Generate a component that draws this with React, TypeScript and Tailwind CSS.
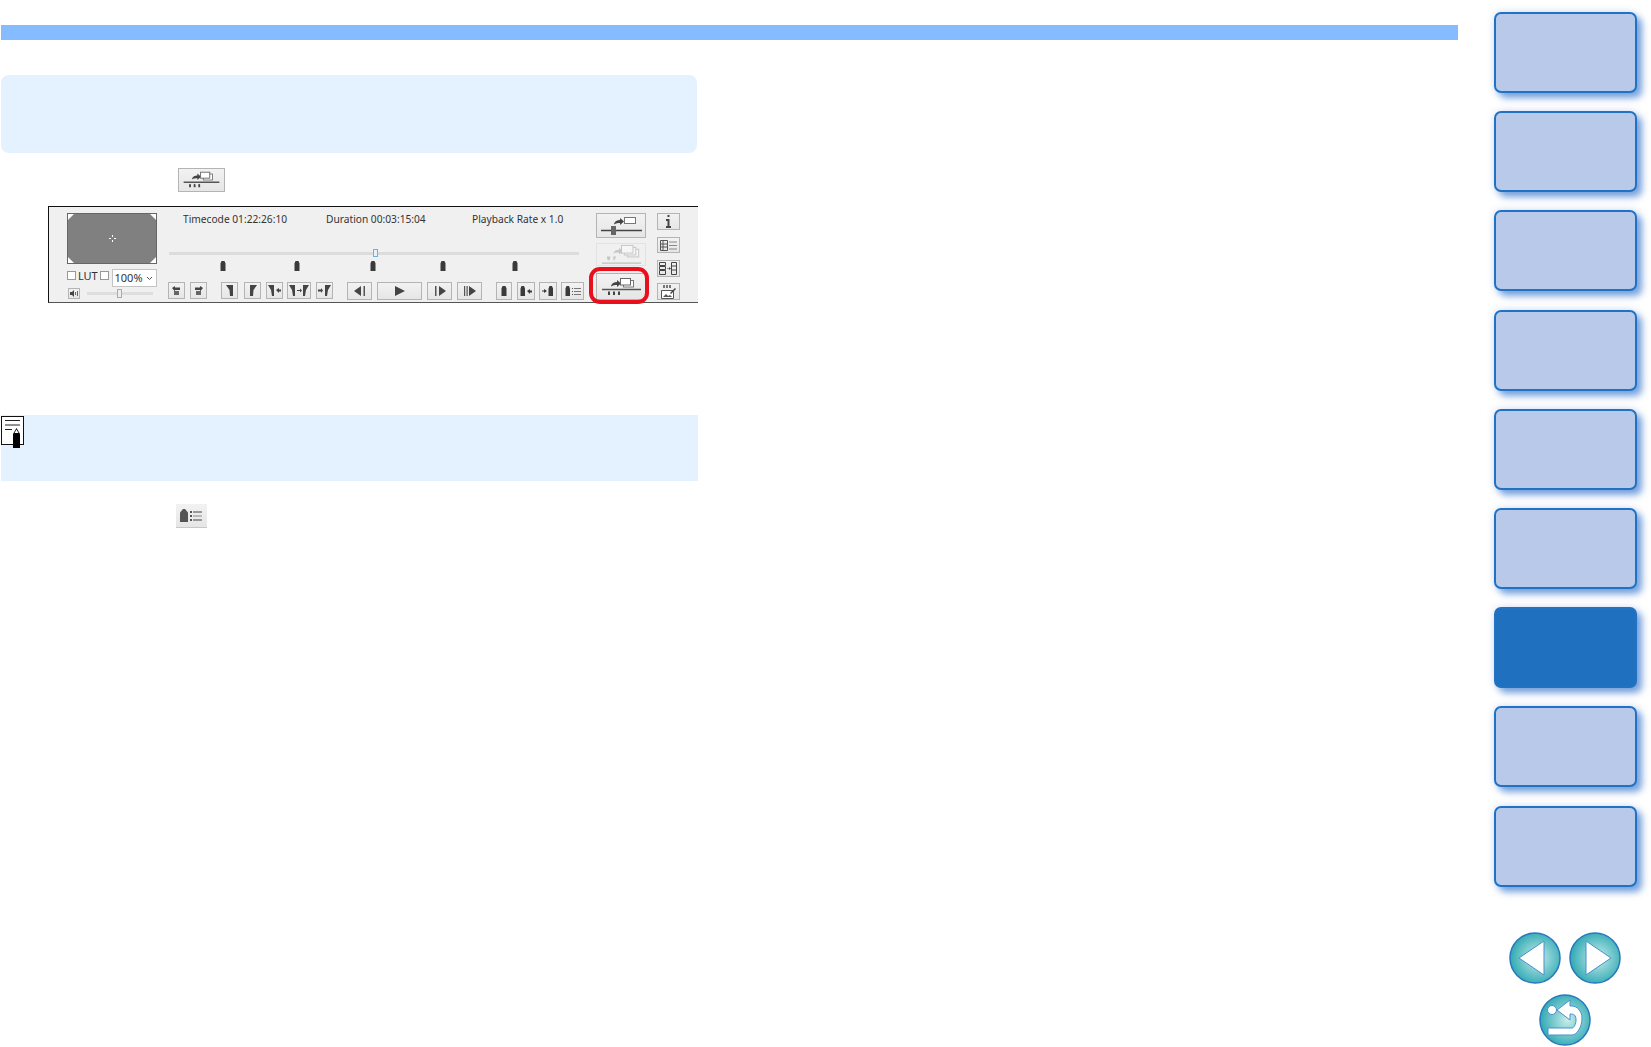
import type { ReactNode } from 'react'

const navCards = [false, false, false, false, false, false, true, false, false]

function Btn({ className, children }: { className: string; children?: ReactNode }) {
  return (
    <div className={`flex shrink-0 items-center justify-center border border-[#b4b4b4] bg-gradient-to-b from-[#f2f2f2] to-[#e6e6e6] ${className}`}>
      {children}
    </div>
  )
}

function Marker({ className }: { className?: string }) {
  return (
    <svg viewBox="0 0 8 10" className={`h-[10px] w-[8px] shrink-0 ${className ?? ''}`}>
      <path d="M2.500 0h3l1 2.500V10h-5V2.500z" fill="#3a3a3a" />
    </svg>
  )
}

function SeqIcon({ className }: { className: string }) {
  return (
    <svg viewBox="0 0 47 24" className={className}>
      <path d="M13 11c1-3 3-4 6-4V5l4 3.500-4 3.500v-2c-2 0-4 0-6 1.500z" fill="#444" />
      <rect x="25.500" y="5.500" width="10" height="6.500" fill="#fff" stroke="#777" />
      <rect x="22.500" y="3.500" width="10" height="6.500" fill="#fff" stroke="#666" />
      <path d="M4 14.500h39" stroke="#555" strokeWidth="1.500" />
      <path d="M10 20v-3l1-1 1 1v3zM15 20v-3l1-1 1 1v3zM20 20v-3l1-1 1 1v3z" fill="#444" />
    </svg>
  )
}

function NavCircle({ id, children }: { id: string; children: ReactNode }) {
  return (
    <svg viewBox="0 0 52 52" className="h-[52px] w-[52px]">
      <defs>
        <radialGradient id={id} cx="0.55" cy="0.5" r="0.55">
          <stop offset="0" stopColor="#c9eeea" />
          <stop offset="1" stopColor="#2fa9b4" />
        </radialGradient>
      </defs>
      <circle cx="26" cy="26" r="25" fill={`url(#${id})`} stroke="#2a78bd" strokeWidth="1.500" />
      {children}
    </svg>
  )
}

function MiniPlay({ flip, bars }: { flip?: boolean; bars?: boolean }) {
  return (
    <svg viewBox="0 0 16 12" className={`h-[12px] w-[16px] ${flip ? '-scale-x-100' : ''}`}>
      {bars && <path d="M2 1h1.200v10H2zM4.500 1h1.200v10H4.500z" fill="#555" />}
      {!bars && <path d="M3 1h1.500v10H3z" fill="#555" />}
      <path d="M7 1l7 5-7 5z" fill="#444" />
    </svg>
  )
}

function Monitor() {
  return (
    <div className="relative h-[51px] w-[90px] border border-[#666] bg-[#808080]">
      <span className="absolute left-0 top-0 h-0 w-0 border-r-[6px] border-t-[6px] border-r-transparent border-t-white" />
      <span className="absolute right-0 top-0 h-0 w-0 border-l-[6px] border-t-[6px] border-l-transparent border-t-white" />
      <span className="absolute bottom-0 left-0 h-0 w-0 border-b-[6px] border-r-[6px] border-b-white border-r-transparent" />
      <span className="absolute bottom-0 right-0 h-0 w-0 border-b-[6px] border-l-[6px] border-b-white border-l-transparent" />
      <svg viewBox="0 0 7 7" className="absolute left-[41px] top-[21px] h-[7px] w-[7px]">
        <path d="M3 0h1v2H3zM3 5h1v2H3zM0 3h2v1H0zM5 3h2v1H5z" fill="#fff" />
      </svg>
    </div>
  )
}

function PlayerPanel() {
  return (
    <div className="relative ml-[48px] mt-[14px] flex h-[97px] w-[650px] border-y border-l border-y-[#111] border-l-[#111] border-b-[#555] bg-[#f0f0f0] pl-[18px] pt-[6px] font-['Noto_Sans',sans-serif] text-[10.2px] text-[#333]">
      {/* thumbnail and volume */}
      <div className="flex w-[90px] shrink-0 flex-col">
        <Monitor />
        <div className="mt-[5px] flex h-[18px] items-center">
          <span className="mb-[5px] h-[9px] w-[9px] border border-[#999] bg-white" />
          <span className="mb-[5px] ml-[2px] w-[22px] text-[11px] leading-none">LUT</span>
          <span className="mb-[5px] h-[9px] w-[9px] border border-[#999] bg-white" />
          <div className="ml-[3px] flex h-[18px] w-[46px] items-center justify-between border border-[#c4c4c4] bg-white pl-[2px] pr-[3px] text-[11px]">
            <span>100%</span>
            <svg viewBox="0 0 7 5" className="h-[5px] w-[7px]"><path d="M1 1l2.500 2.500L6 1" fill="none" stroke="#555" /></svg>
          </div>
        </div>
        <div className="flex h-[12px] items-center pl-px">
          <Btn className="h-[11px] w-[12px]">
            <svg viewBox="0 0 9 7" className="h-[7px] w-[9px]"><path d="M0 2h2l2-2v7L2 5H0z" fill="#444" /><path d="M5.500 2v3M7.500 1v5" stroke="#666" /></svg>
          </Btn>
          <div className="relative ml-[7px] h-[3px] w-[66px] bg-[#dedede]">
            <span className="absolute left-[30px] top-[-3px] h-[9px] w-[5px] border border-[#aaa] bg-[#eee]" />
          </div>
        </div>
      </div>

      {/* timeline and transport */}
      <div className="ml-[11px] flex w-[417px] shrink-0 flex-col">
        <div className="flex h-[12px] items-center whitespace-nowrap pl-[15px] leading-none">
          <span className="w-[143px]">Timecode 01:22:26:10</span>
          <span className="w-[146px]">Duration 00:03:15:04</span>
          <span>Playback Rate x 1.0</span>
        </div>
        <div className="relative ml-px mt-[24px] h-[8px] w-[410px]">
          <div className="absolute left-0 top-[3px] h-[3px] w-full bg-[#dcdcdc]" />
          <span className="absolute left-[204px] top-0 h-[8px] w-[5px] border border-[#6fb2d8] bg-[#e8f2f8]" />
        </div>
        <div className="mt-[4px] flex h-[10px]">
          <Marker className="ml-[51px]" />
          <Marker className="ml-[66px]" />
          <Marker className="ml-[68px]" />
          <Marker className="ml-[62px]" />
          <Marker className="ml-[64px]" />
        </div>
        <div className="mt-[11px] flex h-[18px] items-start">
          <Btn className="h-[17px] w-[17px]">
            <svg viewBox="0 0 11 11" className="h-[11px] w-[11px]"><path d="M1 3l3-2v1.500h5V5H4v1.500z" fill="#444" /><rect x="3" y="6" width="5" height="4" fill="#666" /></svg>
          </Btn>
          <Btn className="ml-[5px] h-[17px] w-[17px]">
            <svg viewBox="0 0 11 11" className="h-[11px] w-[11px]"><path d="M10 3L7 1v1.500H2V5h5v1.500z" fill="#444" /><rect x="3" y="6" width="5" height="4" fill="#666" /></svg>
          </Btn>
          <Btn className="ml-[14px] h-[17px] w-[17px]">
            <svg viewBox="0 0 8 11" className="h-[11px] w-[8px]"><path d="M0 0h7v11H4L3.500 5z" fill="#444" /></svg>
          </Btn>
          <Btn className="ml-[6px] h-[17px] w-[17px]">
            <svg viewBox="0 0 8 11" className="h-[11px] w-[8px]"><path d="M1 0h7L4.500 5 4 11H1z" fill="#444" /></svg>
          </Btn>
          <Btn className="ml-[5px] h-[17px] w-[17px]">
            <svg viewBox="0 0 13 11" className="h-[11px] w-[13px]"><path d="M0 0h6v11H4L3 5zM8 5l3-2v1.500h2v2h-2V8z" fill="#444" /></svg>
          </Btn>
          <Btn className="ml-[4px] h-[17px] w-[24px]">
            <svg viewBox="0 0 20 11" className="h-[11px] w-[20px]"><path d="M0 0h6v11H4L3 5zM20 0h-6v11h2l1-6zM8 5h3V3.500l2 2-2 2V6H8z" fill="#444" /></svg>
          </Btn>
          <Btn className="ml-[5px] h-[17px] w-[17px]">
            <svg viewBox="0 0 13 11" className="h-[11px] w-[13px]"><path d="M13 0H7v11h2l1-6zM0 4.500h3V3l2 2.500L3 8V6.500H0z" fill="#444" /></svg>
          </Btn>
          <Btn className="ml-[14px] h-[18px] w-[25px]"><MiniPlay flip /></Btn>
          <Btn className="ml-[5px] h-[18px] w-[45px]">
            <svg viewBox="0 0 12 12" className="h-[12px] w-[12px]"><path d="M1 1l10 5-10 5z" fill="#444" /></svg>
          </Btn>
          <Btn className="ml-[5px] h-[18px] w-[25px]"><MiniPlay /></Btn>
          <Btn className="ml-[5px] h-[18px] w-[25px]"><MiniPlay bars /></Btn>
          <Btn className="ml-[14px] h-[18px] w-[16px]"><Marker /></Btn>
          <Btn className="ml-[5px] h-[18px] w-[18px]">
            <svg viewBox="0 0 14 10" className="h-[10px] w-[14px]"><path d="M2.500 0h2.500l1 2.500V10H1.500V2.500zM8 5l3-2v1.500h2v2h-2V8z" fill="#3a3a3a" /></svg>
          </Btn>
          <Btn className="ml-[4px] h-[18px] w-[18px]">
            <svg viewBox="0 0 14 10" className="h-[10px] w-[14px]"><path d="M8.500 0H11l1 2.500V10H7.500V2.500zM1 4.500h2V3l3 2-3 2V5.500H1z" fill="#3a3a3a" /></svg>
          </Btn>
          <Btn className="ml-[4px] h-[18px] w-[23px]">
            <svg viewBox="0 0 16 10" className="h-[10px] w-[16px]"><path d="M1.500 0H4l1 2.500V10H.5V2.500z" fill="#3a3a3a" /><path d="M7 2h1v1H7zM7 5h1v1H7zM7 8h1v1H7z" fill="#555" /><path d="M9 2.500h7M9 5.500h7M9 8.500h7" stroke="#777" /></svg>
          </Btn>
        </div>
      </div>

      {/* sequence buttons */}
      <div className="ml-[11px] flex w-[50px] shrink-0 flex-col">
        <Btn className="h-[25px] w-[50px]">
          <svg viewBox="0 0 47 22" className="h-[22px] w-[47px]">
            <path d="M16 9c1-3 3-4 6-4V3l4 3.500-4 3.500V8c-2 0-4 0-6 1.500z" fill="#444" />
            <rect x="26.500" y="2.500" width="11" height="6" fill="#fff" stroke="#777" />
            <path d="M3 15.500h41" stroke="#444" strokeWidth="1.500" />
            <rect x="13" y="11" width="5" height="9" fill="#666" />
          </svg>
        </Btn>
        <div className="mt-[5px] flex h-[23px] w-[50px] items-center justify-center border border-[#e2e2e2]">
          <svg viewBox="0 0 47 22" className="h-[21px] w-[47px] opacity-40">
            <path d="M15 10c1-3 3-4 6-4V4l4 3.500-4 3.500V9c-2 0-4 0-6 1z" fill="#888" />
            <rect x="29.500" y="5.500" width="12" height="8" fill="#fff" stroke="#888" />
            <rect x="26.500" y="3.500" width="12" height="8" fill="#fff" stroke="#888" />
            <rect x="23.500" y="1.500" width="12" height="8" fill="#fff" stroke="#888" />
            <path d="M8 13h4l-1 4H9zM15 13h3l-2 4h-1z" fill="#888" />
            <path d="M3 20h41" stroke="#777" strokeWidth="1.500" />
          </svg>
        </div>
        <Btn className="mt-[7px] h-[27px] w-[50px]">
          <SeqIcon className="h-[24px] w-[47px]" />
        </Btn>
      </div>

      {/* side tools */}
      <div className="ml-[11px] flex w-[23px] shrink-0 flex-col">
        <Btn className="h-[17px] w-[23px]">
          <svg viewBox="0 0 7 13" className="h-[13px] w-[7px]"><path d="M2.500 0h2v2h-2zM1 4h3.500v7H6v2H1v-2h1.500V6H1z" fill="#444" /></svg>
        </Btn>
        <Btn className="mt-[7px] h-[16px] w-[23px]">
          <svg viewBox="0 0 17 11" className="h-[11px] w-[17px]"><path d="M.5.500h7v10h-7zM.5 4h7M.5 7h7M3 .5v10" fill="none" stroke="#555" /><path d="M9 2h8M9 5.500h8M9 9h8" stroke="#888" /></svg>
        </Btn>
        <Btn className="mt-[7px] h-[17px] w-[23px]">
          <svg viewBox="0 0 19 13" className="h-[13px] w-[19px]"><path d="M.5.500h6v3h-6zM.5 4.500h6v3h-6zM.5 8.500h6v4h-6zM12.500.500h5v12h-5zM12.500 4h5M12.500 8h5" fill="none" stroke="#444" /><path d="M8 6.500h2V5l2 1.500L10 8V7H8z" fill="#444" /></svg>
        </Btn>
        <Btn className="mt-[6px] h-[17px] w-[23px]">
          <svg viewBox="0 0 17 14" className="h-[14px] w-[17px]"><path d="M1.500 5.500h12v8h-12z" fill="#fff" stroke="#555" /><path d="M3 12l3-3 2 2 2-1 2 2z" fill="#555" /><path d="M10 8l5-5 1 1-5 5z" fill="#444" /><path d="M3 0h2v3H3zM6 0h2v3H6zM9 0h2v3H9z" fill="#777" /></svg>
        </Btn>
      </div>

      {/* red highlight round the button */}
      <div className="absolute left-[540px] top-[60px] h-[37px] w-[60px] rounded-[11px] border-4 border-[#e8101c]" />
    </div>
  )
}

export default function App() {
  return (
    <div className="flex h-[1047px] w-[1651px] overflow-hidden bg-white">
      <main className="w-[1459px] shrink-0 pt-[25px]">
        <div className="ml-px h-[15px] w-[1457px] bg-[#84bcff]" />
        <div className="ml-px mt-[35px] h-[78px] w-[696px] rounded-lg bg-[#e4f1fe]" />
        <Btn className="ml-[178px] mt-[15px] h-[24px] w-[47px]">
          <SeqIcon className="h-[22px] w-[45px]" />
        </Btn>
        <PlayerPanel />
        <div className="relative ml-px mt-[112px] h-[66px] w-[697px] bg-[#e4f1fe]">
          <svg viewBox="0 0 23 32" className="absolute left-0 top-px h-[32px] w-[23px]">
            <rect x="0.500" y="0.500" width="22" height="28" fill="#fff" stroke="#111" />
            <path d="M4 4.500h15M4 9h15M4 13.500h7" stroke="#222" />
            <path d="M12 18l3.500-6 3.500 6v14h-7z" fill="#000" />
            <path d="M13.500 17l2-3.500 2 3.500z" fill="#fff" />
          </svg>
        </div>
        <Btn className="ml-[176px] mt-[23px] h-[24px] w-[31px] border-x-0 border-t-0 border-b-[#c8c8c8]">
          <svg viewBox="0 0 23 14" className="h-[14px] w-[23px]">
            <path d="M3 0h2l3 3.500V13H0V3.500z" fill="#555" />
            <path d="M10 2h2v2h-2zM10 6h2v2h-2zM10 10h2v2h-2z" fill="#555" />
            <path d="M13 3h9" stroke="#444" /><path d="M13 7h9" stroke="#888" /><path d="M13 11h9" stroke="#444" />
          </svg>
        </Btn>
      </main>

      <aside className="ml-[35px] flex w-[143px] shrink-0 flex-col items-center pt-[12px]">
        <div className="flex w-full flex-col gap-[18.2px]">
          {navCards.map((active, i) => (
            <div
              key={i}
              className={`h-[81px] rounded-[7px] border-2 border-[#2272c3] shadow-[5px_5px_7px_rgba(35,105,200,0.6),0_0_9px_rgba(60,105,205,0.2)] ${active ? 'bg-[#2070c0]' : 'bg-[#b8c9e9]'}`}
            />
          ))}
        </div>
        <div className="mr-[2px] mt-[45px] flex gap-[8px]">
          <NavCircle id="nav-prev">
            <path d="M35 9v34L10 26z" fill="#fff" stroke="#4a8fd0" />
          </NavCircle>
          <NavCircle id="nav-next">
            <path d="M17 9v34l25-17z" fill="#fff" stroke="#4a8fd0" />
          </NavCircle>
        </div>
        <div className="mr-[2px] mt-[10px] h-[52px]">
          <NavCircle id="nav-back">
            <circle cx="13" cy="16" r="4.500" fill="#fff" stroke="#4a8fd0" />
            <path d="M18 16L31 6v6h2c5 0 10 5 10 12 0 9-5 17-10 17H9v-7h24c2 0 4-4 4-8 0-5-2-6-6-6v6z" fill="#fff" stroke="#4a8fd0" strokeLinejoin="round" />
          </NavCircle>
        </div>
      </aside>
    </div>
  )
}
